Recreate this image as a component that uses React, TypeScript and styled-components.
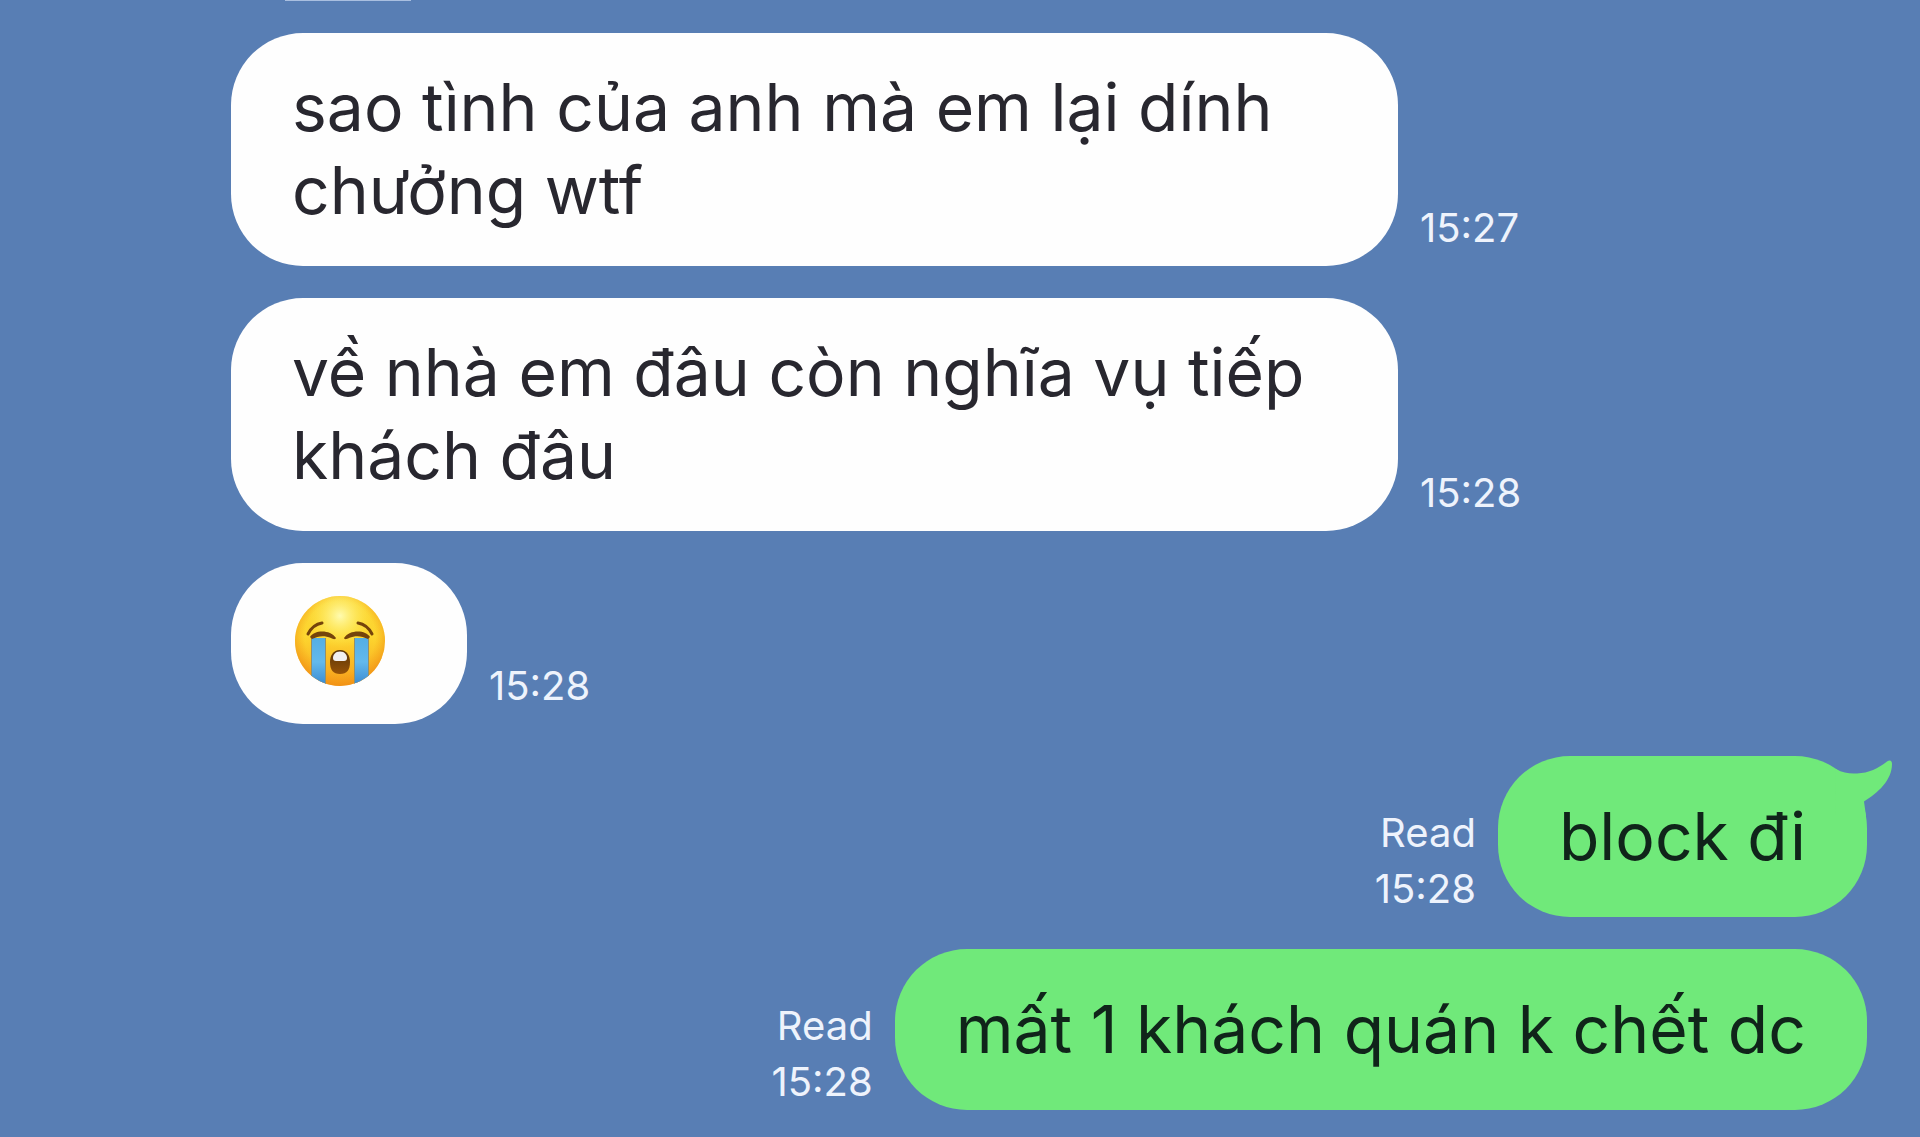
import React from "react";
import styled, { createGlobalStyle } from "styled-components";

const GlobalStyle = createGlobalStyle`
  *, *::before, *::after { box-sizing: border-box; }
  html, body { margin: 0; background: #587eb4; }
`;

const Chat = styled.main`
  display: flex;
  flex-direction: column;
  gap: 32px;
  min-height: 100vh;
  padding: 0 53px 26px 231px;
  overflow: hidden;
  background: #587eb4;
  font-family: Inter, "Noto Sans", sans-serif;
`;

/* Lower edge of the bubble that has scrolled off the top */
const ScrolledEdge = styled.div`
  width: 126px;
  height: 1px;
  margin-left: 54px;
  background: #a9bfe0;
`;

const Row = styled.article<{ $sent?: boolean }>`
  display: flex;
  flex-direction: ${(p) => (p.$sent ? "row-reverse" : "row")};
  align-items: flex-end;
  gap: 22px;
`;

const Bubble = styled.div<{ $sent?: boolean }>`
  position: relative;
  display: flex;
  align-items: center;
  min-width: 236px;
  max-width: 1167px;
  min-height: 161px;
  padding: 33px 61px 34px;
  border-radius: 72px;
  background: ${(p) => (p.$sent ? "#70e97a" : "#fefefe")};
  color: ${(p) => (p.$sent ? "#10241a" : "#28272f")};
`;

const Message = styled.p`
  margin: 0;
  font-size: 66px;
  line-height: 83px;
`;

const Meta = styled.div<{ $sent?: boolean }>`
  display: flex;
  flex-direction: column;
  flex-shrink: 0;
  align-items: ${(p) => (p.$sent ? "flex-end" : "flex-start")};
  padding-bottom: ${(p) => (p.$sent ? 0 : 10)}px;
  color: #eef3fc;
  font-size: 40px;
  line-height: 56px;
`;

const Tail = styled.svg`
  position: absolute;
  top: 0;
  right: -26px;
  width: 60px;
  height: 60px;
  fill: #70e97a;
`;

const Emoji = styled.svg`
  display: block;
  width: 90px;
  height: 90px;
  margin: 0 0 4px 3px;
`;

const BubbleTail = () => (
  <Tail viewBox="0 0 60 60" aria-hidden="true">
    <path d="M3 13C10 17 17 18 24 17.500C36 17 46 12 54 5.500C57 3.500 59 4.500 59 8C59 24 45 37 31 45.500L33 60H2Z" />
  </Tail>
);

const CryingFace = () => (
  <Emoji viewBox="0 0 90 90" role="img" aria-label="loudly crying face">
    <defs>
      <linearGradient id="skin" x1="0" y1="0" x2="0" y2="1">
        <stop offset="0" stopColor="#fbd336" />
        <stop offset="0.45" stopColor="#fdd62f" />
        <stop offset="1" stopColor="#f7a01c" />
      </linearGradient>
      <radialGradient id="rim" cx="0.5" cy="0.45" r="0.56">
        <stop offset="0.7" stopColor="#f59a16" stopOpacity="0" />
        <stop offset="1" stopColor="#ee8a12" stopOpacity="0.75" />
      </radialGradient>
      <radialGradient id="shine" cx="0.5" cy="0.22" r="0.36">
        <stop offset="0" stopColor="#fffbb0" />
        <stop offset="1" stopColor="#fff04a" stopOpacity="0" />
      </radialGradient>
      <linearGradient id="tear" x1="0" y1="0" x2="0" y2="1">
        <stop offset="0" stopColor="#55aee4" />
        <stop offset="0.5" stopColor="#63b9ec" />
        <stop offset="1" stopColor="#3888d0" />
      </linearGradient>
      <linearGradient id="mouth" x1="0" y1="0" x2="0" y2="1">
        <stop offset="0" stopColor="#5b3606" />
        <stop offset="1" stopColor="#965208" />
      </linearGradient>
      <clipPath id="face">
        <circle cx="45" cy="45" r="45" />
      </clipPath>
    </defs>
    <circle cx="45" cy="45" r="45" fill="url(#skin)" />
    <circle cx="45" cy="45" r="45" fill="url(#rim)" />
    <circle cx="45" cy="45" r="45" fill="url(#shine)" />
    <g clipPath="url(#face)">
      <path d="M16 42H31V90H16ZM59 42H74V90H59Z" fill="url(#tear)" />
      <path d="M16.500 42V90M30.500 42V90M59.500 42V90M73.500 42V90" stroke="#91906d" strokeWidth="1" />
    </g>
    <path d="M15 41C19 34 35 33 41 42C40 44 38 43 36 42C29 39 23 40 17 43ZM75 41C71 34 55 33 49 42C50 44 52 43 54 42C61 39 67 40 73 43Z" fill="#75440b" />
    <path d="M13 38C16 32 21 28 27 27M77 38C74 32 69 28 63 27" fill="none" stroke="#75440b" strokeWidth="3" strokeLinecap="round" />
    <path d="M45 54C38 54 35 60 35 66C35 74 38 78 45 78C52 78 55 74 55 66C55 60 52 54 45 54Z" fill="url(#mouth)" />
    <path d="M45 55.500C40 55.500 38 59 38 62C38 64 39 65 41 65H49C51 65 52 64 52 62C52 59 50 55.500 45 55.500Z" fill="#f2f0f1" />
  </Emoji>
);

type Entry = { text?: string; time: string; sent?: boolean; tail?: boolean };

const entries: Entry[] = [
  { text: "sao tình của anh mà em lại dính chưởng wtf", time: "15:27" },
  { text: "về nhà em đâu còn nghĩa vụ tiếp khách đâu", time: "15:28" },
  { time: "15:28" },
  { text: "block đi", time: "15:28", sent: true, tail: true },
  { text: "mất 1 khách quán k chết dc", time: "15:28", sent: true },
];

export default function App() {
  return (
    <>
      <GlobalStyle />
      <Chat lang="vi">
        <ScrolledEdge />
        {entries.map(({ text, time, sent, tail }, i) => (
          <Row key={i} $sent={sent}>
            <Bubble $sent={sent}>
              {text ? <Message>{text}</Message> : <CryingFace />}
              {tail && <BubbleTail />}
            </Bubble>
            <Meta $sent={sent}>
              {sent && <span>Read</span>}
              <time>{time}</time>
            </Meta>
          </Row>
        ))}
      </Chat>
    </>
  );
}
